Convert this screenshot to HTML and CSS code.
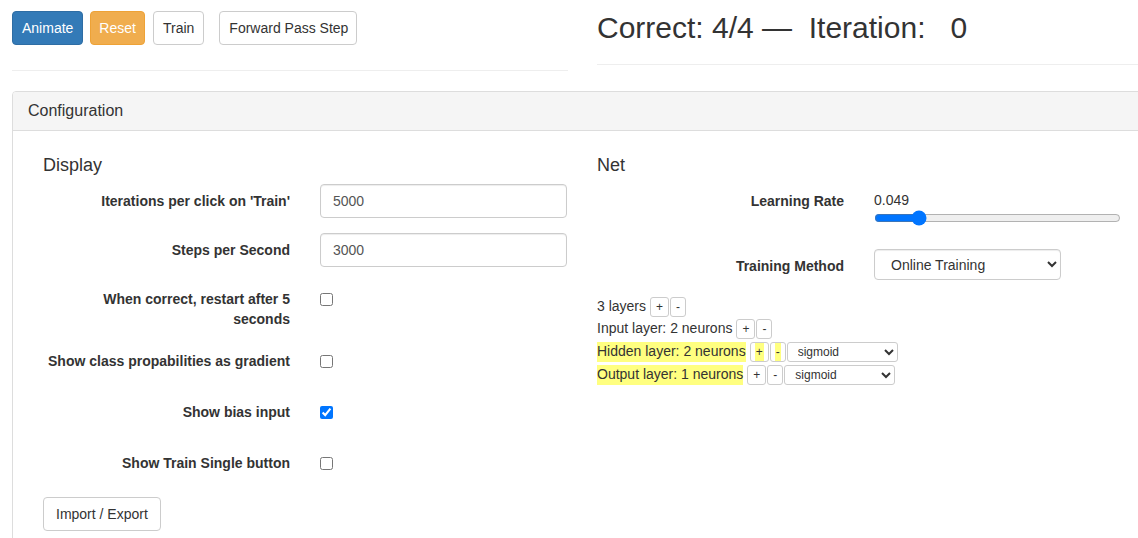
FILE: index.html
```html
<!DOCTYPE html>
<html>
<head>
<meta charset="utf-8">
<link rel="stylesheet" href="styles.css">
</head>
<body>
<div class="page">
  <div class="top">
    <div class="top-left">
      <div class="toolbar">
        <button class="btn btn-primary">Animate</button>
        <button class="btn btn-warning">Reset</button>
        <button class="btn btn-default btn-train">Train</button>
        <button class="btn btn-default btn-fps">Forward Pass Step</button>
      </div>
      <hr class="hr-left">
    </div>
    <div class="top-right">
      <h2 class="status">Correct: 4/4 —&nbsp; Iteration: &nbsp;&nbsp;0</h2>
      <hr class="hr-right">
    </div>
  </div>

  <div class="panel">
    <div class="panel-heading">Configuration</div>
    <div class="panel-body">
      <div class="col">
        <h4 class="section-title">Display</h4>
        <div class="form-group">
          <label class="label-col">Iterations per click on 'Train'</label>
          <div class="input-col"><input class="form-control" type="text" value="5000"></div>
        </div>
        <div class="form-group">
          <label class="label-col">Steps per Second</label>
          <div class="input-col"><input class="form-control" type="text" value="3000"></div>
        </div>
        <div class="form-group check-group">
          <label class="label-col">When correct, restart after 5 seconds</label>
          <div class="input-col"><input class="check" type="checkbox"></div>
        </div>
        <div class="form-group check-group">
          <label class="label-col">Show class propabilities as gradient</label>
          <div class="input-col"><input class="check" type="checkbox"></div>
        </div>
        <div class="form-group check-group">
          <label class="label-col">Show bias input</label>
          <div class="input-col"><input class="check" type="checkbox" checked></div>
        </div>
        <div class="form-group check-group">
          <label class="label-col">Show Train Single button</label>
          <div class="input-col"><input class="check" type="checkbox"></div>
        </div>
        <button class="btn btn-default btn-io">Import / Export</button>
      </div>

      <div class="col">
        <h4 class="section-title">Net</h4>
        <div class="form-group lr-group">
          <label class="label-col">Learning Rate</label>
          <div class="input-col">
            <div class="lr-value">0.049</div>
            <input class="range" type="range" min="0" max="0.31" step="0.001" value="0.049">
          </div>
        </div>
        <div class="form-group">
          <label class="label-col">Training Method</label>
          <div class="input-col">
            <select class="form-control method">
              <option>Online Training</option>
              <option>Batch Training</option>
            </select>
          </div>
        </div>
        <div class="layers">
          <div class="layer-row"><span>3 layers</span><button class="btn-xs">+</button><button class="btn-xs">-</button></div>
          <div class="layer-row"><span>Input layer: 2 neurons</span><button class="btn-xs">+</button><button class="btn-xs">-</button></div>
          <div class="layer-row tall"><span class="hl">Hidden layer: 2 neurons</span><button class="btn-xs"><span class="hl">+</span></button><button class="btn-xs"><span class="hl">-</span></button><select class="act"><option>sigmoid</option><option>tanh</option><option>linear</option></select></div>
          <div class="layer-row tall"><span class="hl">Output layer: 1 neurons</span><button class="btn-xs">+</button><button class="btn-xs">-</button><select class="act"><option>sigmoid</option><option>tanh</option><option>linear</option></select></div>
        </div>
      </div>
    </div>
  </div>
</div>
</body>
</html>
```

FILE: styles.css
```css
html, body {
  margin: 0;
  padding: 0;
  overflow: hidden;
  background: #fff;
}
body {
  font-family: "Liberation Sans", Arial, sans-serif;
  font-size: 14px;
  line-height: 1.42857;
  color: #333;
}
.page {
  padding-left: 12px;
  width: 1160px;
}
.top {
  display: flex;
}
.top-left {
  width: 556px;
}
.top-right {
  margin-left: 29px;
  width: 560px;
}
.toolbar {
  display: flex;
  margin-top: 11px;
}
.btn {
  font-family: "Liberation Sans", Arial, sans-serif;
  font-size: 14px;
  line-height: 20px;
  padding: 6px 9px;
  border: 1px solid #ccc;
  border-radius: 4px;
  background: #fff;
  color: #333;
  cursor: pointer;
}
.btn-primary {
  background: #337ab7;
  border-color: #2e6da4;
  color: #fff;
}
.btn-warning {
  background: #f0ad4e;
  border-color: #eea236;
  color: #fff;
  margin-left: 7px;
  padding: 6px 8px;
}
.btn-train {
  margin-left: 8px;
}
.btn-fps {
  margin-left: 15px;
  padding: 6px 8px 6px 9px;
}
.btn-io {
  padding: 6px 12px;
}
.hr-left {
  margin: 25px 0 20px;
  border: 0;
  border-top: 1px solid #eee;
}
.status {
  font-size: 30px;
  font-weight: 500;
  line-height: 33px;
  margin: 11px 0 0;
  white-space: nowrap;
}
.hr-right {
  margin: 20px 0 0;
  border: 0;
  border-top: 1px solid #eee;
}
.panel {
  border: 1px solid #ddd;
  border-radius: 4px;
  width: 1138px;
}
.panel-heading {
  background: #f5f5f5;
  border-bottom: 1px solid #ddd;
  padding: 10px 15px;
  font-size: 16px;
  line-height: 17.6px;
  border-radius: 3px 3px 0 0;
}
.panel-body {
  display: flex;
  padding: 15px;
}
.col {
  width: 524px;
  padding: 0 15px;
  flex: none;
}
.section-title {
  font-size: 18px;
  font-weight: 500;
  line-height: 19.8px;
  margin: 10px 0 9px;
}
.form-group {
  display: flex;
  margin: 0 -15px 15px;
}
.label-col {
  width: 247px;
  padding: 8px 15px 0;
  text-align: right;
  font-weight: bold;
  flex: none;
}
.input-col {
  width: 247px;
  padding: 0 15px;
  flex: none;
}
.form-control {
  display: block;
  box-sizing: border-box;
  width: 100%;
  height: 34px;
  padding: 6px 12px;
  font-family: "Liberation Sans", Arial, sans-serif;
  font-size: 14px;
  line-height: 20px;
  color: #555;
  background: #fff;
  border: 1px solid #ccc;
  border-radius: 4px;
  box-shadow: inset 0 1px 1px rgba(0,0,0,.075);
}
.check-group {
  min-height: 36px;
}
.check-group .label-col {
  margin-bottom: -1px;
}
.check {
  margin: 11px 0 0;
  width: 13px;
  height: 13px;
}
.lr-group {
  min-height: 50px;
}
.lr-value {
  margin-top: 7px;
  line-height: 19px;
}
.range {
  display: block;
  width: 247px;
  height: 16px;
  margin: 0;
}
.method {
  width: 187px;
  height: 31px;
  padding: 5px 12px;
  color: #333;
}
.layers {
  padding-top: 1px;
}
.layer-row {
  display: flex;
  align-items: center;
  min-height: 22px;
  white-space: nowrap;
}
.layer-row.tall {
  min-height: 23px;
}
.layer-row > span {
  margin-right: 4px;
}
.btn-xs {
  font-family: "Liberation Sans", Arial, sans-serif;
  font-size: 12px;
  line-height: 18px;
  padding: 0 5px;
  height: 20px;
  border: 1px solid #ccc;
  border-radius: 3px;
  background: #fff;
  color: #333;
  margin-right: 1px;
}
.btn-xs .hl {
  display: inline-block;
  padding: 0 1px;
  margin: 0 -1px;
}
.hl {
  background: #ffff80;
}
.act {
  width: 111px;
  height: 20px;
  margin-left: 0;
  font-family: "Liberation Sans", Arial, sans-serif;
  font-size: 12px;
  color: #333;
  background: #fff;
  border: 1px solid #ccc;
  border-radius: 3px;
  padding: 0 0 0 6px;
}
```
